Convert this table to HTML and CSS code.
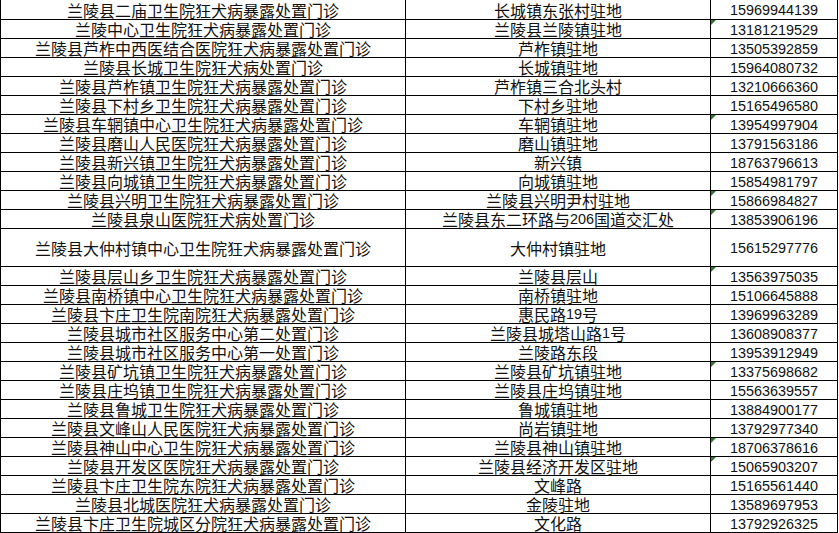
FILE: index.html
```html
<!DOCTYPE html>
<html lang="zh-CN">
<head>
<meta charset="utf-8">
<title>兰陵县狂犬病暴露处置门诊</title>
<link rel="stylesheet" href="styles.css">
</head>
<body>
<div class="sheet">
  <div class="cell first">兰陵县二庙卫生院狂犬病暴露处置门诊</div>
  <div class="cell first">长城镇东张村驻地</div>
  <div class="cell first tel">15969944139</div>

  <div class="cell">兰陵中心卫生院狂犬病暴露处置门诊</div>
  <div class="cell">兰陵县兰陵镇驻地</div>
  <div class="cell tel"><span class="flag"></span>13181219529</div>

  <div class="cell">兰陵县芦柞中西医结合医院狂犬病暴露处置门诊</div>
  <div class="cell">芦柞镇驻地</div>
  <div class="cell tel">13505392859</div>

  <div class="cell">兰陵县长城卫生院狂犬病处置门诊</div>
  <div class="cell">长城镇驻地</div>
  <div class="cell tel">15964080732</div>

  <div class="cell">兰陵县芦柞镇卫生院狂犬病暴露处置门诊</div>
  <div class="cell">芦柞镇三合北头村</div>
  <div class="cell tel">13210666360</div>

  <div class="cell">兰陵县下村乡卫生院狂犬病暴露处置门诊</div>
  <div class="cell">下村乡驻地</div>
  <div class="cell tel">15165496580</div>

  <div class="cell">兰陵县车辋镇中心卫生院狂犬病暴露处置门诊</div>
  <div class="cell">车辋镇驻地</div>
  <div class="cell tel"><span class="flag"></span>13954997904</div>

  <div class="cell">兰陵县磨山人民医院狂犬病暴露处置门诊</div>
  <div class="cell">磨山镇驻地</div>
  <div class="cell tel">13791563186</div>

  <div class="cell">兰陵县新兴镇卫生院狂犬病暴露处置门诊</div>
  <div class="cell">新兴镇</div>
  <div class="cell tel">18763796613</div>

  <div class="cell">兰陵县向城镇卫生院狂犬病暴露处置门诊</div>
  <div class="cell">向城镇驻地</div>
  <div class="cell tel">15854981797</div>

  <div class="cell">兰陵县兴明卫生院狂犬病暴露处置门诊</div>
  <div class="cell">兰陵县兴明尹村驻地</div>
  <div class="cell tel"><span class="flag"></span>15866984827</div>

  <div class="cell">兰陵县泉山医院狂犬病处置门诊</div>
  <div class="cell">兰陵县东二环路与<span class="num">206</span>国道交汇处</div>
  <div class="cell tel"><span class="flag"></span>13853906196</div>

  <div class="cell tall">兰陵县大仲村镇中心卫生院狂犬病暴露处置门诊</div>
  <div class="cell tall">大仲村镇驻地</div>
  <div class="cell tall tel">15615297776</div>

  <div class="cell">兰陵县层山乡卫生院狂犬病暴露处置门诊</div>
  <div class="cell">兰陵县层山</div>
  <div class="cell tel"><span class="flag"></span>13563975035</div>

  <div class="cell">兰陵县南桥镇中心卫生院狂犬病暴露处置门诊</div>
  <div class="cell">南桥镇驻地</div>
  <div class="cell tel">15106645888</div>

  <div class="cell">兰陵县卞庄卫生院南院狂犬病暴露处置门诊</div>
  <div class="cell">惠民路<span class="num">19</span>号</div>
  <div class="cell tel">13969963289</div>

  <div class="cell">兰陵县城市社区服务中心第二处置门诊</div>
  <div class="cell">兰陵县城塔山路<span class="num">1</span>号</div>
  <div class="cell tel">13608908377</div>

  <div class="cell">兰陵县城市社区服务中心第一处置门诊</div>
  <div class="cell">兰陵路东段</div>
  <div class="cell tel">13953912949</div>

  <div class="cell">兰陵县矿坑镇卫生院狂犬病暴露处置门诊</div>
  <div class="cell">兰陵县矿坑镇驻地</div>
  <div class="cell tel"><span class="flag"></span>13375698682</div>

  <div class="cell">兰陵县庄坞镇卫生院狂犬病暴露处置门诊</div>
  <div class="cell">兰陵县庄坞镇驻地</div>
  <div class="cell tel">15563639557</div>

  <div class="cell">兰陵县鲁城卫生院狂犬病暴露处置门诊</div>
  <div class="cell">鲁城镇驻地</div>
  <div class="cell tel">13884900177</div>

  <div class="cell">兰陵县文峰山人民医院狂犬病暴露处置门诊</div>
  <div class="cell">尚岩镇驻地</div>
  <div class="cell tel">13792977340</div>

  <div class="cell">兰陵县神山中心卫生院狂犬病暴露处置门诊</div>
  <div class="cell">兰陵县神山镇驻地</div>
  <div class="cell tel"><span class="flag"></span>18706378616</div>

  <div class="cell">兰陵县开发区医院狂犬病暴露处置门诊</div>
  <div class="cell">兰陵县经济开发区驻地</div>
  <div class="cell tel"><span class="flag"></span>15065903207</div>

  <div class="cell">兰陵县卞庄卫生院东院狂犬病暴露处置门诊</div>
  <div class="cell">文峰路</div>
  <div class="cell tel">15165561440</div>

  <div class="cell">兰陵县北城医院狂犬病暴露处置门诊</div>
  <div class="cell">金陵驻地</div>
  <div class="cell tel">13589697953</div>

  <div class="cell">兰陵县卞庄卫生院城区分院狂犬病暴露处置门诊</div>
  <div class="cell">文化路</div>
  <div class="cell tel">13792926325</div>
</div>
</body>
</html>
```
FILE: styles.css
```css
html, body {
  margin: 0;
  padding: 0;
  background: #ffffff;
}

.sheet {
  display: grid;
  grid-template-columns: 404px 304px 126px;
  gap: 1px;
  padding: 0 1px 1px 1px;
  width: 836px;
  background: #000000;
}

.cell {
  position: relative;
  height: 18px;
  background: #ffffff;
  display: flex;
  align-items: center;
  justify-content: center;
  white-space: nowrap;
  font-family: "Noto Sans CJK SC", "Noto Sans", sans-serif;
  font-size: 16px;
  line-height: 18px;
  color: #111111;
}

.cell.first {
  height: 19px;
}

.cell.tall {
  height: 37px;
}

.tel,
.num {
  font-family: "Liberation Sans", "Noto Sans", sans-serif;
  font-size: 14.4px;
}

.tel {
  padding-top: 1px;
  box-sizing: border-box;
}

.flag {
  position: absolute;
  top: 0;
  left: 0;
  width: 0;
  height: 0;
  border-top: 5px solid #2f7a33;
  border-right: 5px solid transparent;
}
```
